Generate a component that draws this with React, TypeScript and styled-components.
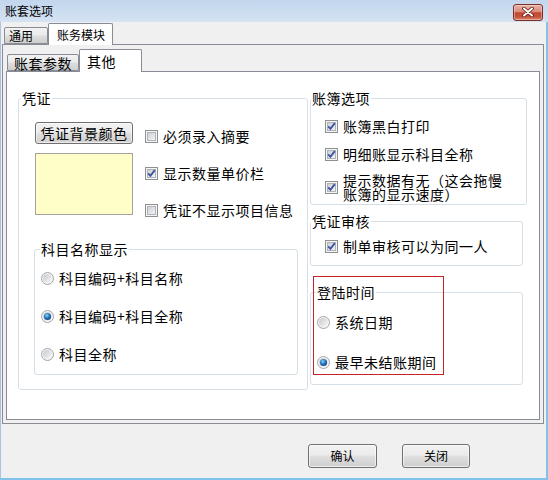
import React from 'react';
import styled, { createGlobalStyle } from 'styled-components';

const GlobalStyle = createGlobalStyle`
  html, body { margin: 0; padding: 0; background: #fff; }
  body { font-family: "Noto Sans CJK SC", "Noto Sans", sans-serif; color: #000; }
  * { box-sizing: border-box; }
`;

const Window = styled.div`
  width: 548px;
  height: 480px;
  display: flex;
  flex-direction: column;
  overflow: hidden;
`;

const TitleBar = styled.div`
  height: 22px;
  flex: none;
  display: flex;
  align-items: center;
  justify-content: space-between;
  padding: 0 5px 0 5px;
  background: linear-gradient(to bottom, #c2d6ed, #d5e3f2);
  font-size: 12px;
  line-height: 14px;
`;

const CloseButton = styled.div`
  width: 30px;
  height: 17px;
  margin-top: 2px;
  display: flex;
  align-items: center;
  justify-content: center;
  border: 1px solid #7a2f27;
  border-radius: 3px;
  background: linear-gradient(
    to bottom,
    #eab1a4 0%,
    #d98a7b 45%,
    #c4462f 52%,
    #c6513a 78%,
    #dd8a6c 100%
  );
  box-shadow: inset 0 0 0 1px rgba(255, 255, 255, 0.35);
`;

const Frame = styled.div`
  flex: 1;
  display: flex;
  flex-direction: column;
  background: #f0f0f0;
  border-left: 1px solid #a8c3e2;
  border-right: 2px solid #7fc3ea;
  border-bottom: 2px solid #7fc3ea;
`;

const TabStrip = styled.div<{ $h: number; $pad: number }>`
  height: ${(p) => p.$h}px;
  flex: none;
  display: flex;
  align-items: flex-end;
  padding-left: ${(p) => p.$pad}px;
`;

const Tab = styled.div<{ $active?: boolean; $w: number; $h: number; $pad: number; $size: number }>`
  position: relative;
  z-index: ${(p) => (p.$active ? 2 : 1)};
  width: ${(p) => p.$w}px;
  height: ${(p) => p.$h}px;
  margin-bottom: ${(p) => (p.$active ? -1 : 0)}px;
  display: flex;
  align-items: center;
  padding-left: ${(p) => p.$pad}px;
  border: 1px solid #898c95;
  border-bottom: ${(p) => (p.$active ? 'none' : '1px solid #898c95')};
  border-radius: 2px 2px 0 0;
  background: ${(p) =>
    p.$active
      ? '#fff'
      : 'linear-gradient(to bottom, #f2f2f2 0%, #ebebeb 45%, #dddddd 55%, #cfcfcf 100%)'};
  font-size: ${(p) => p.$size}px;
  letter-spacing: ${(p) => (p.$size > 12 ? 0.5 : 0)}px;
  line-height: 16px;
  white-space: nowrap;
`;

const OuterPage = styled.div`
  height: 380px;
  flex: none;
  margin: 0 2px 0 1px;
  display: flex;
  flex-direction: column;
  padding: 0 3px 3px 3px;
  border: 1px solid #898c95;
  background: #f0f0f0;
`;

const InnerPage = styled.div`
  flex: 1;
  display: flex;
  align-items: flex-start;
  gap: 2px;
  padding: 18px 0 0 11px;
  border: 1px solid #898c95;
  background: #fff;
`;

const Column = styled.div`
  display: flex;
  flex-direction: column;
`;

const Group = styled.fieldset<{ $w: number; $mt?: number }>`
  margin: ${(p) => p.$mt ?? 0}px 0 0 0;
  padding: 0;
  min-width: 0;
  width: ${(p) => p.$w}px;
  border: 1px solid #d5dfe5;
  border-radius: 3px;
`;

const Legend = styled.legend<{ $x: number }>`
  padding: 0 1px;
  margin-left: ${(p) => p.$x}px;
  font-size: 14px;
  line-height: 16px;
  letter-spacing: 0.5px;
  white-space: nowrap;
`;

const GroupBody = styled.div<{ $pad: string; $gap?: number }>`
  display: flex;
  flex-direction: column;
  gap: ${(p) => p.$gap ?? 0}px;
  padding: ${(p) => p.$pad};
`;

const TopRow = styled.div`
  display: flex;
  gap: 12px;
  margin-left: 1px;
`;

const SwatchColumn = styled.div`
  display: flex;
  flex-direction: column;
  gap: 9px;
`;

const PushButton = styled.button<{ $w: number; $h: number; $size: number }>`
  width: ${(p) => p.$w}px;
  height: ${(p) => p.$h}px;
  margin: 0;
  padding: 0;
  border: 1px solid #707070;
  border-radius: 3px;
  background: linear-gradient(to bottom, #f2f2f2 0%, #ebebeb 45%, #dddddd 55%, #cfcfcf 100%);
  box-shadow: inset 0 0 0 1px rgba(255, 255, 255, 0.6);
  font-family: "Noto Sans CJK SC", "Noto Sans", sans-serif;
  font-size: ${(p) => p.$size}px;
  letter-spacing: ${(p) => (p.$size > 12 ? 0.5 : 0)}px;
  line-height: 16px;
  color: #000;
`;

const Swatch = styled.div`
  width: 98px;
  height: 62px;
  border: 1px solid #a3a3a3;
  background: #fffec8;
`;

const OptionList = styled.div<{ $gap: number }>`
  display: flex;
  flex-direction: column;
  gap: ${(p) => p.$gap}px;
  padding-top: 4px;
`;

const Option = styled.label<{ $lh?: number; $mt?: number }>`
  display: flex;
  align-items: center;
  gap: 5px;
  min-height: 20px;
  margin-top: ${(p) => p.$mt ?? 0}px;
  font-size: 14px;
  letter-spacing: 0.5px;
  line-height: ${(p) => p.$lh ?? 20}px;
  white-space: nowrap;

  svg {
    flex: none;
  }
`;

const Highlight = styled.div`
  position: relative;
  margin-top: 18px;
`;

const RedBox = styled.div`
  position: absolute;
  top: -8px;
  left: 3px;
  width: 131px;
  height: 99px;
  border: 1px solid #c4232a;
  pointer-events: none;
`;

const Footer = styled.div`
  flex: 1;
  display: flex;
  justify-content: flex-end;
  align-items: flex-start;
  gap: 25px;
  padding: 20px 76px 0 0;
`;

const CheckBox = ({ checked }: { checked?: boolean }) => (
  <svg width="13" height="13" viewBox="0 0 13 13">
    <defs>
      <linearGradient id="cbFill" x1="0" y1="0" x2="1" y2="1">
        <stop offset="0" stopColor="#c9cdd3" />
        <stop offset="1" stopColor="#f7f7f7" />
      </linearGradient>
    </defs>
    <rect x="0.5" y="0.5" width="12" height="12" fill="#f5f5f5" stroke="#8e8f8f" />
    <rect x="2.5" y="2.5" width="8" height="8" fill="url(#cbFill)" stroke="#b0b4ba" />
    {checked && (
      <path d="M3.2 6.4 L5.4 8.8 L9.8 3.2" fill="none" stroke="#3f54a0" strokeWidth="1.9" />
    )}
  </svg>
);

const Radio = ({ checked }: { checked?: boolean }) => (
  <svg width="13" height="13" viewBox="0 0 13 13">
    <defs>
      <linearGradient id="rbFill" x1="0" y1="0" x2="1" y2="1">
        <stop offset="0" stopColor="#c6c8cc" />
        <stop offset="1" stopColor="#fafafa" />
      </linearGradient>
      <radialGradient id="rbDot" cx="0.4" cy="0.35" r="0.7">
        <stop offset="0" stopColor="#8fd6f8" />
        <stop offset="0.5" stopColor="#2c7cc0" />
        <stop offset="1" stopColor="#0b3f7a" />
      </radialGradient>
    </defs>
    <circle cx="6.5" cy="6.5" r="6" fill="#f4f4f4" stroke="#a3a5a8" />
    <circle cx="6.5" cy="6.5" r="4.5" fill="url(#rbFill)" />
    {checked && <circle cx="6.5" cy="6.5" r="3.6" fill="url(#rbDot)" />}
  </svg>
);

const CloseGlyph = () => (
  <svg width="12" height="10" viewBox="0 0 12 10">
    <path d="M2 1.5 L10 8.5 M10 1.5 L2 8.5" stroke="#5a1c15" strokeWidth="3.6" strokeLinecap="round" />
    <path d="M2 1.5 L10 8.5 M10 1.5 L2 8.5" stroke="#ffffff" strokeWidth="2" strokeLinecap="round" />
  </svg>
);

export default function App() {
  return (
    <>
      <GlobalStyle />
      <Window>
        <TitleBar>
          <span>账套选项</span>
          <CloseButton>
            <CloseGlyph />
          </CloseButton>
        </TitleBar>
        <Frame>
          <TabStrip $h={22} $pad={3}>
            <Tab $w={44} $h={17} $pad={4} $size={12}>
              通用
            </Tab>
            <Tab $active $w={65} $h={22} $pad={8} $size={12}>
              账务模块
            </Tab>
          </TabStrip>
          <OuterPage>
            <TabStrip $h={26} $pad={1}>
              <Tab $w={72} $h={17} $pad={6} $size={14}>
                账套参数
              </Tab>
              <Tab $active $w={63} $h={23} $pad={7} $size={14}>
                其他
              </Tab>
            </TabStrip>
            <InnerPage>
              <Group $w={290}>
                <Legend $x={2}>凭证</Legend>
                <GroupBody $pad="16px 0 14px 15px" $gap={21}>
                  <TopRow>
                    <SwatchColumn>
                      <PushButton $w={98} $h={22} $size={14}>
                        凭证背景颜色
                      </PushButton>
                      <Swatch />
                    </SwatchColumn>
                    <OptionList $gap={17}>
                      <Option>
                        <CheckBox />
                        必须录入摘要
                      </Option>
                      <Option>
                        <CheckBox checked />
                        显示数量单价栏
                      </Option>
                      <Option>
                        <CheckBox />
                        凭证不显示项目信息
                      </Option>
                    </OptionList>
                  </TopRow>
                  <Group $w={264}>
                    <Legend $x={5}>科目名称显示</Legend>
                    <GroupBody $pad="11px 0 10px 6px" $gap={18}>
                      <Option>
                        <Radio />
                        科目编码+科目名称
                      </Option>
                      <Option>
                        <Radio checked />
                        科目编码+科目全称
                      </Option>
                      <Option>
                        <Radio />
                        科目全称
                      </Option>
                    </GroupBody>
                  </Group>
                </GroupBody>
              </Group>

              <Column>
                <Group $w={217}>
                  <Legend $x={0}>账簿选项</Legend>
                  <GroupBody $pad="10px 0 3px 14px">
                    <Option>
                      <CheckBox checked />
                      账簿黑白打印
                    </Option>
                    <Option $mt={8}>
                      <CheckBox checked />
                      明细账显示科目全称
                    </Option>
                    <Option $lh={14} $mt={9}>
                      <CheckBox checked />
                      <span>
                        提示数据有无（这会拖慢
                        <br />
                        账簿的显示速度）
                      </span>
                    </Option>
                  </GroupBody>
                </Group>
                <Group $w={213} $mt={8}>
                  <Legend $x={0}>凭证审核</Legend>
                  <GroupBody $pad="7px 0 9px 14px">
                    <Option>
                      <CheckBox checked />
                      制单审核可以为同一人
                    </Option>
                  </GroupBody>
                </Group>
                <Highlight>
                  <Group $w={213}>
                    <Legend $x={5}>登陆时间</Legend>
                    <GroupBody $pad="12px 0 12px 6px" $gap={20}>
                      <Option>
                        <Radio />
                        系统日期
                      </Option>
                      <Option>
                        <Radio checked />
                        最早未结账期间
                      </Option>
                    </GroupBody>
                  </Group>
                  <RedBox />
                </Highlight>
              </Column>
            </InnerPage>
          </OuterPage>
          <Footer>
            <PushButton $w={69} $h={24} $size={12}>
              确认
            </PushButton>
            <PushButton $w={68} $h={24} $size={12}>
              关闭
            </PushButton>
          </Footer>
        </Frame>
      </Window>
    </>
  );
}
